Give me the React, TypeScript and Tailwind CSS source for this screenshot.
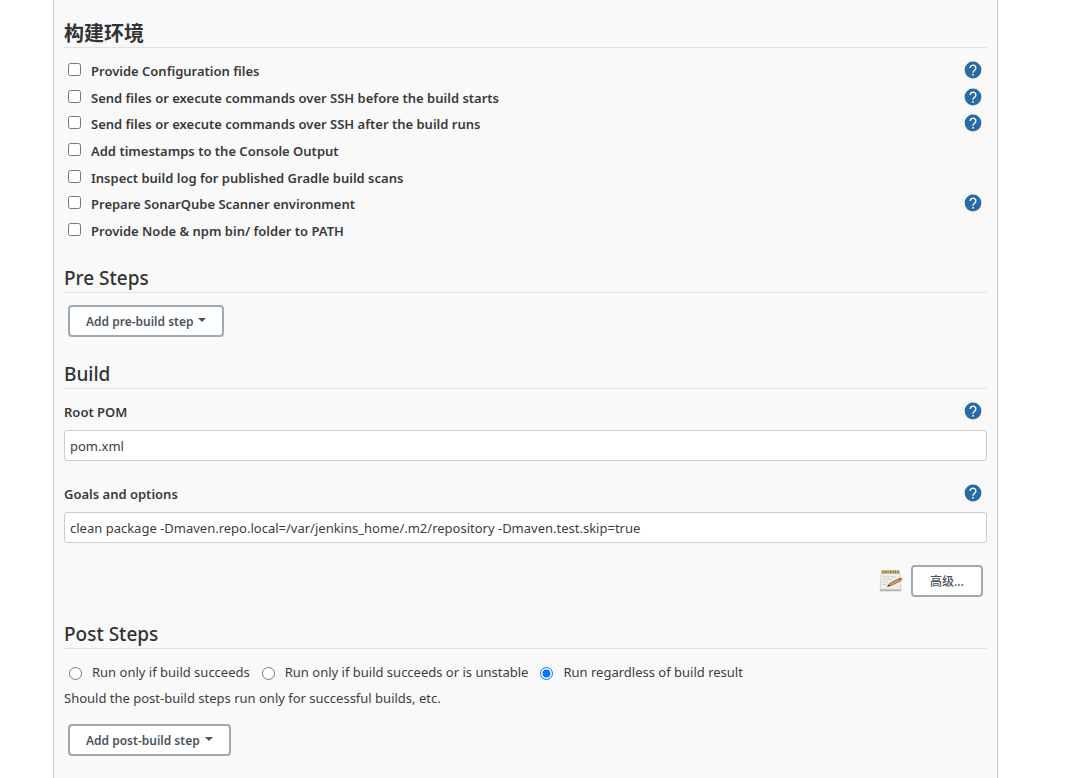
import { useId, useState, type ReactNode } from "react";

function HelpButton({ topic }: { topic: string }) {
  return (
    <button type="button" aria-label={`Help for ${topic}`} className="mr-[5px] size-[18px] shrink-0">
      <svg viewBox="0 0 24 24" className="size-[18px]" aria-hidden="true">
        <circle cx="12" cy="12" r="11.2" fill="#2a6aa3" />
        <path
          d="M8.2 9.300a3.800 3.700 0 1 1 6.200 2.800c-1.500 1.200-2.400 1.800-2.400 3.500"
          fill="none"
          stroke="#fff"
          strokeWidth="1.8"
        />
        <rect x="11" y="17.3" width="2" height="2.2" fill="#fff" />
      </svg>
    </button>
  );
}

function Heading({ children, bold = false }: { children: ReactNode; bold?: boolean }) {
  return (
    <h2
      className={
        "h-8 border-b border-[#e0e0e0] text-[#333] " +
        (bold ? "text-[20px] leading-9 font-bold" : "text-[19px] leading-[34px] font-medium")
      }
    >
      {children}
    </h2>
  );
}

function CheckRow({ label, help }: { label: string; help?: boolean }) {
  const id = useId();
  return (
    <div className="flex flex-1 items-center">
      <input id={id} type="checkbox" className="mb-[3px] ml-1 size-[13px] shrink-0" />
      <label htmlFor={id} className="ml-[10px] flex-1 font-semibold text-[#3a3a3a]">
        {label}
      </label>
      {help && (
        <div className="flex pb-0.5">
          <HelpButton topic={label} />
        </div>
      )}
    </div>
  );
}

function TextField({ label, initial }: { label: string; initial: string }) {
  const id = useId();
  const [value, setValue] = useState(initial);
  return (
    <div>
      <div className="flex h-6 items-center justify-between">
        <label htmlFor={id} className="pt-0.5 font-semibold text-[#3a3a3a]">
          {label}
        </label>
        <HelpButton topic={label} />
      </div>
      <input
        id={id}
        type="text"
        value={value}
        onChange={(e) => setValue(e.target.value)}
        className="mt-[7px] block h-[31px] w-full rounded-[3px] border border-[#ccc] bg-white px-[5px]"
      />
    </div>
  );
}

function StepButton({ children }: { children: ReactNode }) {
  return (
    <button
      type="button"
      className="ml-1 flex h-8 items-center rounded-[4px] border-2 border-[#9daab3] bg-white px-4 text-[12px] font-semibold text-[#4d545d]"
    >
      <span className="pt-0.5">{children}</span>
      <svg viewBox="0 0 8 4" className="mb-[3px] ml-[5px] h-1 w-2" aria-hidden="true">
        <path d="M0 0h8L4 4z" fill="#4d545d" />
      </svg>
    </button>
  );
}

function NotepadIcon() {
  return (
    <svg viewBox="0 0 24 24" className="size-6" aria-hidden="true">
      <path d="M2.5 3h18l1.5 18.5H1z" fill="#eeeeec" stroke="#c8c8c4" strokeWidth=".8" />
      <path d="M1 20.300h21v2H1z" fill="#b4b5b1" />
      <path d="M2.5 1.500h18v3h-18z" fill="#b3a968" />
      <path d="M4 1v3.500M6.500 1v3.500M9 1v3.500M11.500 1v3.500M14 1v3.500M16.500 1v3.500M19 1v3.500" stroke="#857d42" strokeWidth=".8" />
      <path d="M4 8h13M4 10.500h9M4 13h5M4 15.500h4" stroke="#cfd0cc" />
      <path d="M8.500 17.500l2.500-3.500L20 9.500l1.500 2.500-9.500 4.500z" fill="#cf9b50" stroke="#8a6636" strokeWidth=".7" />
      <path d="M8.200 17.600l1.600-2.200 1.200 1.500z" fill="#333" />
      <path d="M19.300 9.800l2-1c1.600-.6 2.700 1.200 1.500 2.200L20.800 12.200z" fill="#d2604f" />
    </svg>
  );
}

const environment = [
  { label: "Provide Configuration files", help: true },
  { label: "Send files or execute commands over SSH before the build starts", help: true },
  { label: "Send files or execute commands over SSH after the build runs", help: true },
  { label: "Add timestamps to the Console Output" },
  { label: "Inspect build log for published Gradle build scans" },
  { label: "Prepare SonarQube Scanner environment", help: true },
  { label: "Provide Node & npm bin/ folder to PATH" },
];

const conditions = [
  "Run only if build succeeds",
  "Run only if build succeeds or is unstable",
  "Run regardless of build result",
];

export default function App() {
  const [condition, setCondition] = useState(2);
  return (
    <div className="min-h-screen bg-white pr-20 pl-[53px] font-['Noto_Sans','Noto_Sans_CJK_SC',sans-serif] text-[13px] leading-5 text-[#3d3d3d]">
      <main className="min-h-screen border-x border-[#ccc] bg-[#f9f9f9] px-[10px] pt-4 pb-[22px]">
        <section>
          <Heading bold>构建环境</Heading>
          <div className="mt-[10px] flex h-[186px] flex-col">
            {environment.map((item) => (
              <CheckRow key={item.label} {...item} />
            ))}
          </div>
        </section>

        <section className="mt-[17px]">
          <Heading>Pre Steps</Heading>
          <div className="mt-3">
            <StepButton>Add pre-build step</StepButton>
          </div>
        </section>

        <section className="mt-5">
          <Heading>Build</Heading>
          <div className="mt-[10px] flex flex-col gap-5">
            <TextField label="Root POM" initial="pom.xml" />
            <TextField
              label="Goals and options"
              initial="clean package -Dmaven.repo.local=/var/jenkins_home/.m2/repository -Dmaven.test.skip=true"
            />
          </div>
          <div className="mt-[22px] mr-1 flex items-center justify-end gap-2">
            <NotepadIcon />
            <button
              type="button"
              className="h-8 w-18 rounded-[4px] border-2 border-[#9daab3] bg-white pt-0.5 text-[12px] font-medium text-[#4d545d]"
            >
              高级...
            </button>
          </div>
        </section>

        <section className="mt-5">
          <Heading>Post Steps</Heading>
          <div className="mt-[13px] flex flex-wrap gap-x-3">
            {conditions.map((text, i) => (
              <label key={text} className="flex items-center first:ml-[5px]">
                <input
                  type="radio"
                  name="condition"
                  checked={condition === i}
                  onChange={() => setCondition(i)}
                  className="mt-[3px] mr-[10px] size-[13px]"
                />
                {text}
              </label>
            ))}
          </div>
          <p className="mt-[6px]">Should the post-build steps run only for successful builds, etc.</p>
          <div className="mt-4">
            <StepButton>Add post-build step</StepButton>
          </div>
        </section>
      </main>
    </div>
  );
}
